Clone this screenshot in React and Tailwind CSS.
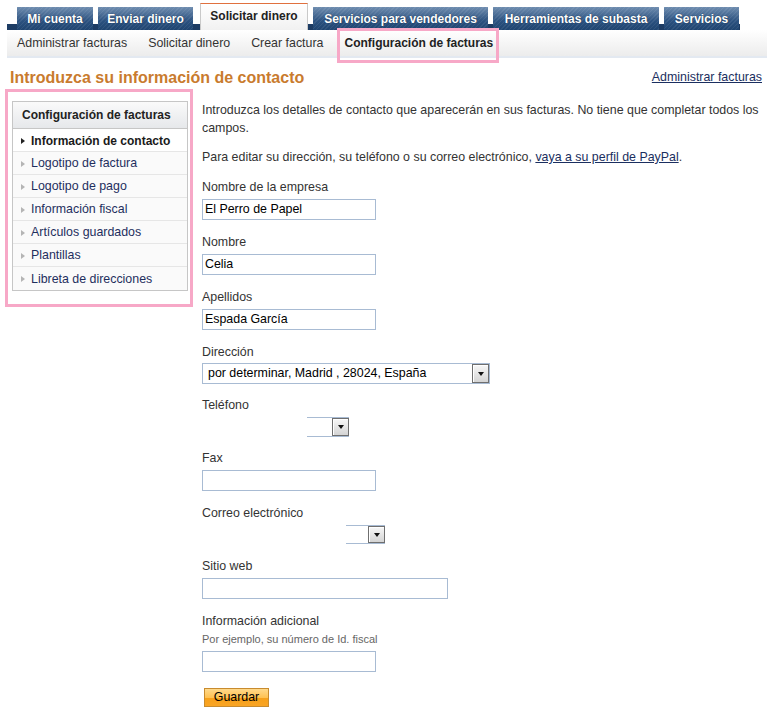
import React from 'react'

const tabs = [
  { label: 'Mi cuenta', w: 'w-[76px]', ml: 'ml-0' },
  { label: 'Enviar dinero', w: 'w-[95px]', ml: 'ml-[5px]' },
  { label: 'Solicitar dinero', w: 'w-[108px]', ml: 'ml-[7px]', active: true },
  { label: 'Servicios para vendedores', w: 'w-[175px]', ml: 'ml-[5px]' },
  { label: 'Herramientas de subasta', w: 'w-[166px]', ml: 'ml-[5px]' },
  { label: 'Servicios', w: 'w-[75px]', ml: 'ml-[5px]' },
]

const subnav = ['Administrar facturas', 'Solicitar dinero', 'Crear factura']

const sideItems = [
  'Información de contacto',
  'Logotipo de factura',
  'Logotipo de pago',
  'Información fiscal',
  'Artículos guardados',
  'Plantillas',
  'Libreta de direcciones',
]

const SelectButton = ({ h = 'h-[21px]' }) => (
  <span className={`flex ${h} w-[17px] shrink-0 items-center justify-center border border-[#6f6f6f] bg-[linear-gradient(to_bottom,#f7f7f7,#d4d4d4)] shadow-[inset_1px_1px_0_#fff]`}>
    <span className="h-0 w-0 border-x-[3.5px] border-t-[4px] border-x-transparent border-t-[#111]" />
  </span>
)

const Field = ({ label, value = '', width = 'w-[174px]', mt = 'mt-[13px]' }) => (
  <div className={mt}>
    <div className="leading-[18px]">{label}</div>
    <div className={`mt-[3px] h-[21px] ${width} border border-[#a8bbd3] px-[2px] leading-[19px] text-black`}>
      {value}
    </div>
  </div>
)

export default function App() {
  return (
    <div className="min-h-[708px] w-[775px] bg-white font-['Liberation_Sans',Arial,sans-serif] text-[12.4px] text-[#333]">
      {/* tabs */}
      <div className="pl-[7px] pt-[3px]">
        <div className="flex h-[27px] w-[733px] items-end bg-[linear-gradient(to_bottom,transparent_21px,#1d3c64_21px)] pl-[10px] text-[12px]">
          {tabs.map((t) =>
            t.active ? (
              <div
                key={t.label}
                className={`${t.ml} ${t.w} flex h-[27px] items-center justify-center border-x border-t border-x-[#c9c9c9] border-t-[#e0703e] bg-[linear-gradient(to_bottom,#ffffff,#f1f1f1)] pb-[2px] font-bold text-[#222]`}
              >
                {t.label}
              </div>
            ) : (
              <div
                key={t.label}
                className={`${t.ml} ${t.w} flex h-[23px] items-center justify-center bg-[repeating-linear-gradient(135deg,rgba(255,255,255,0.07)_0_1px,transparent_1px_3px),linear-gradient(to_bottom,#6f8db0,#2c5280_60%,#1f4470)] pt-[1px] font-bold text-white [text-shadow:0_0_1px_#0b2340]`}
              >
                {t.label}
              </div>
            )
          )}
        </div>

        {/* sub nav */}
        <div className="flex h-[28px] w-[760px] items-stretch gap-[21px] border-b-2 border-[#e3e9f1] bg-[linear-gradient(to_bottom,#ffffff,#ececec)] pl-[10px] text-[#333]">
          {subnav.map((s) => (
            <span key={s} className="flex items-center">
              {s}
            </span>
          ))}
          <span className="relative flex items-center text-[12px] font-bold text-[#222]">
            Configuración de facturas
            <span className="absolute -bottom-[7px] -left-[7px] -right-[6px] -top-[2px] border-[3px] border-[#f7a8c7]" />
          </span>
        </div>
      </div>

      {/* heading */}
      <div className="mt-[10px] flex items-start justify-between pl-[10px] pr-[13px]">
        <h1 className="text-[16px] font-bold leading-[20px] text-[#c97b2e]">
          Introduzca su información de contacto
        </h1>
        <a className="leading-[18px] text-[#1b2f60] underline">Administrar facturas</a>
      </div>

      {/* body */}
      <div className="mt-[1px] flex items-start pl-[5px]">
        <div className="w-[188px] shrink-0 border-[3px] border-[#f7a8c7] pb-[13px] pl-[4px] pr-[2px] pt-[9px]">
          <div className="w-[176px] border border-[#c6c6c6]">
            <div className="flex h-[27px] items-center border-b border-[#c6c6c6] bg-[linear-gradient(to_bottom,#fafafa,#e6e8eb)] pl-[9px] text-[12px] font-bold text-[#222]">
              Configuración de facturas
            </div>
            {sideItems.map((it, i) => (
              <div
                key={it}
                className={`flex h-[23px] items-center gap-[6px] pl-[8px] pt-[1px] ${i < sideItems.length - 1 ? 'border-b border-[#e6e6e6]' : ''} ${i === 0 ? 'bg-white text-[12px] font-bold text-[#1a1a1a]' : 'bg-[#fafafa] text-[#1f2f5e]'}`}
              >
                <span
                  className={`h-0 w-0 border-y-[3px] border-l-[4px] border-y-transparent ${i === 0 ? 'border-l-[#222]' : 'border-l-[#b5b5b5]'}`}
                />
                {it}
              </div>
            ))}
          </div>
        </div>

        <div className="ml-[9px] w-[565px] pt-[12px]">
          <p className="leading-[18px]">
            Introduzca los detalles de contacto que aparecerán en sus facturas. No tiene que completar todos los
            campos.
          </p>
          <p className="mt-[11px] leading-[18px]">
            Para editar su dirección, su teléfono o su correo electrónico,{' '}
            <a className="text-[#1b2f60] underline">vaya a su perfil de PayPal</a>.
          </p>

          <Field label="Nombre de la empresa" value="El Perro de Papel" mt="mt-[12px]" />
          <Field label="Nombre" value="Celia" />
          <Field label="Apellidos" value="Espada García" />

          <div className="mt-[13px]">
            <div className="leading-[18px]">Dirección</div>
            <div className="mt-[2px] flex h-[21px] w-[288px] items-center justify-between border border-[#a8bbd3] pl-[5px] text-black">
              <span>por determinar, Madrid , 28024, España</span>
              <SelectButton h="h-[19px]" />
            </div>
          </div>

          <div className="mt-[12px]">
            <div className="leading-[18px]">Teléfono</div>
            <div className="ml-[105px] mt-[3px] flex h-[20px] w-[42px] items-center justify-end border-y border-[#a8bbd3]">
              <SelectButton h="h-[18px]" />
            </div>
          </div>

          <Field label="Fax" mt="mt-[12px]" />

          <div className="mt-[13px]">
            <div className="h-[14px] overflow-hidden leading-[18px]">Correo electrónico</div>
            <div className="ml-[144px] mt-[7px] flex h-[19px] w-[39px] items-center justify-end border-y border-[#a8bbd3]">
              <SelectButton h="h-[17px]" />
            </div>
          </div>

          <Field label="Sitio web" width="w-[246px]" />

          <div className="mt-[13px]">
            <div className="leading-[18px]">Información adicional</div>
            <div className="text-[11px] leading-[18px] text-[#666]">Por ejemplo, su número de Id. fiscal</div>
            <div className="mt-[3px] h-[21px] w-[174px] border border-[#a8bbd3]" />
          </div>

          <button className="ml-[2px] mt-[16px] flex h-[19px] w-[65px] items-center justify-center border border-[#c88b2e] bg-[linear-gradient(to_bottom,#ffd98a,#ffc253_50%,#f7a11a_55%,#f9a424)] text-[12.4px] text-black">
            Guardar
          </button>
        </div>
      </div>
    </div>
  )
}
